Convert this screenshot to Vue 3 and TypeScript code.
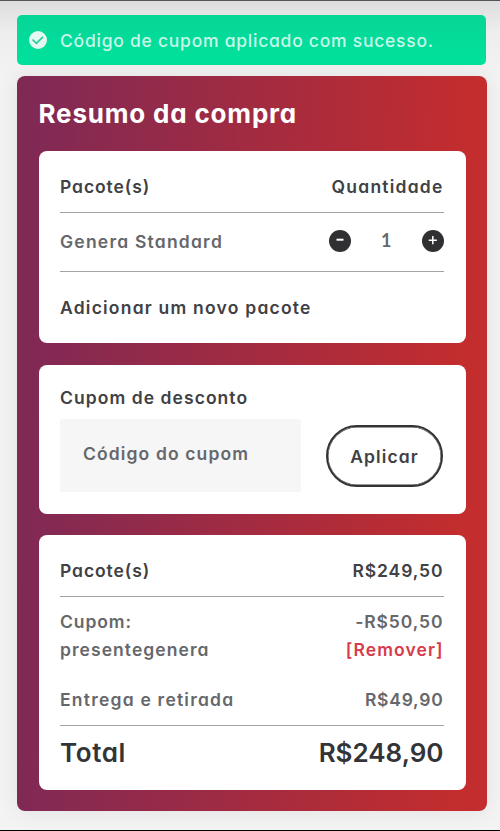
<script setup lang="ts">
import { ref } from 'vue'

const quantity = ref(1)
const coupon = ref('')

function decrease(): void {
  if (quantity.value > 1) quantity.value--
}

function increase(): void {
  quantity.value++
}
</script>

<template>
  <main class="page">
    <div class="alert" role="status">
      <svg class="alert-icon" viewBox="0 0 18 18">
        <circle cx="9" cy="9" r="9" fill="#e3f8f2" />
        <path d="M3.5 8.5 7.4 12.4 14 5.9" fill="none" stroke="#2bcb9d" stroke-width="1.7" />
      </svg>
      <span>Código de cupom aplicado com sucesso.</span>
    </div>

    <section class="summary">
      <h1 class="title">Resumo da compra</h1>

      <div class="card packages">
        <div class="row head">
          <span class="narrow">Pacote(s)</span>
          <span class="end wide">Quantidade</span>
        </div>
        <div class="row item">
          <span class="wide">Genera Standard</span>
          <div class="stepper">
            <button class="round" @click="decrease">
              <svg viewBox="0 0 22 22"><path d="M7.5 9.7h7" stroke="#fff" stroke-width="2" /></svg>
            </button>
            <span class="count">{{ quantity }}</span>
            <button class="round" @click="increase">
              <svg viewBox="0 0 22 22"><path d="M6.7 10.2h8.2M10.8 6.1v8.2" stroke="#fff" stroke-width="1.5" /></svg>
            </button>
          </div>
        </div>
        <div class="row add"><span class="wide">Adicionar um novo pacote</span></div>
      </div>

      <div class="card coupon">
        <label class="label" for="coupon">Cupom de desconto</label>
        <div class="coupon-form">
          <input id="coupon" v-model="coupon" class="field" type="text" placeholder="Código do cupom" />
          <button class="apply">Aplicar</button>
        </div>
      </div>

      <div class="card totals">
        <div class="row subtotal">
          <span class="narrow">Pacote(s)</span>
          <span class="end narrow">R$249,50</span>
        </div>
        <div class="row discount">
          <span><span class="narrow">Cupom:</span><br />presentegenera</span>
          <span class="end"><span class="narrow">-R$50,50</span><br /><a class="remove">[Remover]</a></span>
        </div>
        <div class="row delivery">
          <span class="wide">Entrega e retirada</span>
          <span class="end price">R$49,90</span>
        </div>
        <div class="row total">
          <span class="total-label">Total</span>
          <span class="total-value">R$248,90</span>
        </div>
      </div>
    </section>
  </main>
</template>

<style>
body {
  margin: 0;
  overflow: hidden;
}
</style>

<style scoped>
.page {
  box-sizing: border-box;
  height: 831px;
  padding: 14px 13px 0 17px;
  border-top: 1px solid #54555b;
  border-bottom: 1.5px solid #000;
  background: linear-gradient(#dedede 0, #ededed 30px, #f3f3f3 75px, #f3f3f3 100%);
  font-family: Inter, "Open Sans", sans-serif;
  font-feature-settings: "cv11" 1;
  font-size: 17.5px;
  font-weight: 600;
  letter-spacing: 1.06px;
  color: #404144;
}

.alert {
  display: flex;
  align-items: center;
  box-sizing: border-box;
  height: 50px;
  margin: 0 1px 11px 0;
  padding-left: 12px;
  gap: 13px;
  border-radius: 5px;
  background: linear-gradient(#06d596, #00e29d);
  color: #c9f8e9;
  font-weight: 500;
  letter-spacing: 0.75px;
  white-space: nowrap;
}

.alert-icon {
  width: 18px;
  height: 18px;
  flex: none;
}

.summary {
  box-sizing: border-box;
  height: 735px;
  padding: 0 21.5px;
  border-radius: 8px;
  background: linear-gradient(91deg, #802955 3%, #c42d2d 95%);
  box-shadow: 0 0 22px rgba(0, 0, 0, 0.08);
}

.title {
  display: flex;
  align-items: center;
  height: 75px;
  margin: 0;
  font-size: 26px;
  font-weight: 700;
  letter-spacing: 0.82px;
  color: #fff;
}

.card {
  box-sizing: border-box;
  padding: 0 22px 0 21.5px;
  border-radius: 8px;
  background: #fff;
}

.packages {
  height: 192px;
  margin-bottom: 21.5px;
}

.coupon {
  height: 149px;
  margin-bottom: 21.5px;
}

.totals {
  height: 255px;
}

.row {
  display: flex;
  align-items: center;
  justify-content: space-between;
  box-sizing: border-box;
  white-space: nowrap;
}

.narrow {
  letter-spacing: 0.92px;
}

.wide {
  letter-spacing: 1.22px;
}

.price {
  letter-spacing: 0.75px;
}

.end {
  text-align: right;
}

.head,
.subtotal {
  height: 61.5px;
  padding-top: 10px;
  border-bottom: 1px solid #a3a3a3;
}

.item {
  height: 59px;
  border-bottom: 1px solid #a3a3a3;
  color: #66676b;
}

.add {
  height: 71px;
}

.stepper {
  display: flex;
  align-items: center;
  justify-content: space-between;
  width: 115.5px;
  margin: 0 -0.5px 1px 0;
}

.count {
  margin-bottom: 2px;
  font-family: Lato, sans-serif;
  font-size: 18px;
  font-weight: 700;
  letter-spacing: 0;
}

.round {
  width: 22px;
  height: 22px;
  padding: 0;
  border: 0;
  border-radius: 50%;
  background: #303033;
}

.round svg {
  display: block;
  fill: none;
}

.label {
  display: block;
  height: 54px;
  padding-top: 11px;
  box-sizing: border-box;
  line-height: 43px;
}

.coupon-form {
  display: flex;
  align-items: center;
  justify-content: space-between;
  padding-right: 0.5px;
}

.field {
  box-sizing: border-box;
  width: 241px;
  height: 73px;
  padding: 0 23px 3px;
  border: 0;
  border-radius: 3px;
  background: #f6f6f6;
  font: inherit;
  font-feature-settings: inherit;
  letter-spacing: 1.12px;
}

.field::placeholder {
  color: #66676b;
  opacity: 1;
}

.apply {
  box-sizing: border-box;
  width: 117px;
  height: 62px;
  padding: 1px 0 0;
  margin-top: 1px;
  border: 2.5px solid #333336;
  border-radius: 31px;
  background: #fff;
  box-shadow: inset 0 0 0 0.5px #333336;
  color: inherit;
  font: inherit;
  font-feature-settings: inherit;
  letter-spacing: 1.12px;
}

.discount {
  height: 78px;
  padding-top: 1px;
  line-height: 28px;
  color: #66676b;
}

.remove {
  color: #d73b4b;
}

.delivery {
  height: 51px;
  border-bottom: 1px solid #a3a3a3;
  color: #66676b;
}

.total {
  height: 54px;
  font-size: 26px;
  color: #333437;
}

.total-label {
  letter-spacing: 0.6px;
}

.total-value {
  letter-spacing: 0;
}
</style>
